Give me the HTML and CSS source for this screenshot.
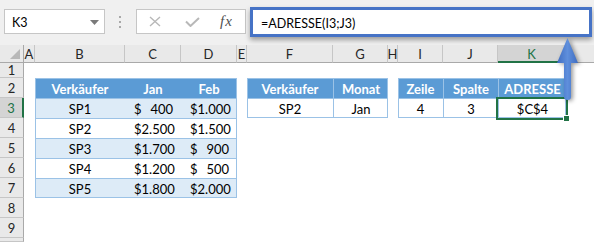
FILE: index.html
```html
<!DOCTYPE html>
<html lang="de">
<head>
  <meta charset="UTF-8" />
  <title>ADRESSE - Excel</title>
  <link rel="stylesheet" href="styles.css">
</head>
<body>

  <div class="toolbar">
    <div class="namebox">
      <span>K3</span>
      <svg class="caret" width="9" height="5" viewBox="0 0 9 5"><path d="M0 0h9L4.5 5z" fill="#7a7a7a"/></svg>
    </div>
    <div class="grip"><i></i><i></i><i></i></div>
    <div class="fnbuttons">
      <svg class="cancel" width="12" height="11" viewBox="0 0 12 11"><path d="M1 1l10 9M11 1L1 10" stroke="#b8b8b8" stroke-width="1.4" fill="none"/></svg>
      <svg class="enter" width="15" height="10" viewBox="0 0 15 10"><path d="M1 4.5l4.5 4.5L14 1" stroke="#b8b8b8" stroke-width="2" fill="none"/></svg>
      <span class="fx">fx</span>
    </div>
    <div class="formula">=ADRESSE(I3;J3)</div>
  </div>

  <div class="sheet">
    <!-- column headers -->
    <div class="corner"></div>
    <div class="ch">A</div>
    <div class="ch">B</div>
    <div class="ch">C</div>
    <div class="ch">D</div>
    <div class="ch">E</div>
    <div class="ch">F</div>
    <div class="ch">G</div>
    <div class="ch">H</div>
    <div class="ch">I</div>
    <div class="ch">J</div>
    <div class="ch sel">K</div>
    <div class="ch last"></div>

    <!-- row headers -->
    <div class="rh">1</div>
    <div class="rh">2</div>
    <div class="rh sel">3</div>
    <div class="rh">4</div>
    <div class="rh">5</div>
    <div class="rh">6</div>
    <div class="rh">7</div>
    <div class="rh">8</div>
    <div class="rh">9</div>
    <div class="rh"></div>

    <!-- sales table -->
    <div class="tbl sales">
      <div class="row head"><span>Verkäufer</span><span>Jan</span><span>Feb</span></div>
      <div class="row band"><span>SP1</span><span class="money"><b>$</b>400</span><span class="money"><b>$</b>1.000</span></div>
      <div class="row"><span>SP2</span><span class="money"><b>$</b>2.500</span><span class="money"><b>$</b>1.500</span></div>
      <div class="row band"><span>SP3</span><span class="money"><b>$</b>1.700</span><span class="money"><b>$</b>900</span></div>
      <div class="row"><span>SP4</span><span class="money"><b>$</b>1.200</span><span class="money"><b>$</b>500</span></div>
      <div class="row band"><span>SP5</span><span class="money"><b>$</b>1.800</span><span class="money"><b>$</b>2.000</span></div>
    </div>

    <!-- lookup table -->
    <div class="tbl lookup">
      <div class="row head"><span>Verkäufer</span><span>Monat</span></div>
      <div class="row"><span>SP2</span><span>Jan</span></div>
    </div>

    <!-- address table -->
    <div class="tbl address">
      <div class="row head"><span>Zeile</span><span>Spalte</span><span>ADRESSE</span></div>
      <div class="row"><span>4</span><span>3</span><span class="active">$C$4</span></div>
    </div>
  </div>

  <svg class="arrow" width="32" height="72" viewBox="0 0 32 72">
    <defs>
      <linearGradient id="shaft" x1="0" y1="0" x2="1" y2="0">
        <stop offset="0" stop-color="#3f6dc1"/>
        <stop offset="0.5" stop-color="#5f8fdc"/>
        <stop offset="1" stop-color="#3f6dc1"/>
      </linearGradient>
    </defs>
    <path d="M14.5 3L25 28H18V62Q18 65 14.5 65Q11 65 11 62V28H4Z" fill="url(#shaft)"/>
  </svg>

</body>
</html>
```

FILE: styles.css
```css
body {
  margin: 0;
  width: 594px;
  height: 242px;
  overflow: hidden;
  position: relative;
  background-color: #ffffff;
  font-family: Lato, "Liberation Sans", sans-serif;
  color: #000000;
}

/* formula bar */

.toolbar {
  display: flex;
  align-items: center;
  height: 45px;
  padding: 2px 0 4px 4px;
  box-sizing: border-box;
  background-color: #f0f0f0;
}

.namebox {
  width: 101px;
  height: 25px;
  box-sizing: border-box;
  border: 1px solid #c6c6c6;
  background-color: #ffffff;
  display: flex;
  align-items: center;
  justify-content: space-between;
  padding: 2px 5px 0 7px;
  font-size: 12.5px;
}

.grip {
  display: flex;
  flex-direction: column;
  gap: 3px;
  margin: 0 15px 0 14px;
}

.grip i {
  width: 2px;
  height: 2px;
  background-color: #a8a8a8;
}

.fnbuttons {
  width: 110px;
  height: 25px;
  box-sizing: border-box;
  border: 1px solid #c6c6c6;
  background-color: #ffffff;
  display: flex;
  align-items: center;
}

.cancel {
  margin-left: 12px;
}

.enter {
  margin-left: 24px;
}

.fx {
  margin-left: 20px;
  font-family: "Liberation Serif", serif;
  font-style: italic;
  font-size: 15px;
  color: #505050;
  letter-spacing: 1px;
}

.formula {
  margin-left: 4px;
  width: 342px;
  height: 30px;
  box-sizing: border-box;
  border: 3px solid #4673c6;
  background-color: #ffffff;
  box-shadow: 0 3px 5px rgba(0, 0, 0, 0.35);
  padding: 3px 0 0 8px;
  display: flex;
  align-items: center;
  font-size: 12.5px;
}

/* grid */

.sheet {
  display: grid;
  grid-template-columns: 24px 11px 90px 56px 56px 10px 86px 55px 10px 45px 55px 68px 1fr;
  grid-template-rows: 18px 15px repeat(8, 20px) 4px;
  font-size: 13px;
}

.corner,
.ch,
.rh {
  background-color: #e9e9e9;
  box-sizing: border-box;
  color: #262626;
  display: flex;
  align-items: center;
  justify-content: center;
}

.corner {
  position: relative;
  border-right: 1px solid #a9a9a9;
  border-bottom: 1px solid #a9a9a9;
}

.corner::after {
  content: "";
  position: absolute;
  right: 3px;
  bottom: 3px;
  border-left: 10px solid transparent;
  border-bottom: 10px solid #b8b8b8;
}

.ch {
  border-right: 1px solid #c6c6c6;
  border-bottom: 1px solid #a9a9a9;
  padding-top: 1px;
}

.ch.last {
  border-right: none;
}

.ch.sel {
  background-color: #d4d4d4;
  color: #217346;
  border-bottom: 2px solid #217346;
}

.rh {
  grid-column: 1;
  border-right: 1px solid #a9a9a9;
  border-bottom: 1px solid #c6c6c6;
}

.rh.sel {
  background-color: #d4d4d4;
  color: #217346;
  border-right: 2px solid #217346;
}

/* tables */

.tbl {
  display: flex;
  flex-direction: column;
  outline: 1px solid #9bc2e6;
  outline-offset: -1px;
}

.sales {
  grid-column: 3 / 6;
  grid-row: 3 / 9;
}

.lookup {
  grid-column: 7 / 9;
  grid-row: 3 / 5;
}

.address {
  grid-column: 10 / 13;
  grid-row: 3 / 5;
}

.row {
  display: grid;
  height: 20px;
  box-sizing: border-box;
}

.row + .row {
  border-top: 1px solid #9bc2e6;
}

.sales .row {
  grid-template-columns: 90px 56px 56px;
}

.lookup .row {
  grid-template-columns: 86px 55px;
}

.address .row {
  grid-template-columns: 45px 55px 68px;
}

.row span {
  display: flex;
  align-items: center;
  justify-content: center;
  padding-top: 1px;
}

.lookup .row span + span,
.address .row span + span {
  border-left: 1px solid #9bc2e6;
}

.row.head {
  background-color: #5b9bd5;
  color: #ffffff;
  font-weight: bold;
}

.row.band {
  background-color: #ddebf7;
}

.row span.money {
  justify-content: space-between;
  padding: 1px 8px 0 9px;
}

.money b {
  font-weight: normal;
}

.row span.active {
  position: relative;
  outline: 2px solid #217346;
  outline-offset: 0;
}

.active::after {
  content: "";
  position: absolute;
  right: -4px;
  bottom: -4px;
  width: 5px;
  height: 5px;
  background-color: #217346;
  border: 1px solid #ffffff;
}

/* arrow over the grid */

.arrow {
  position: absolute;
  left: 553px;
  top: 35px;
  filter: drop-shadow(2px 1px 2px rgba(0, 0, 0, 0.4));
}
```
